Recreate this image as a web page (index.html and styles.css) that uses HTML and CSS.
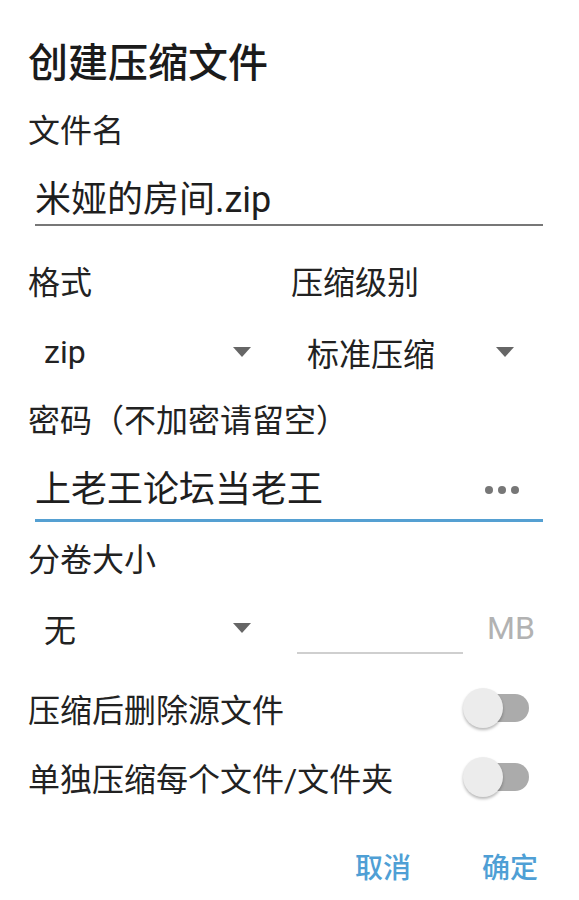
FILE: index.html
```html
<!DOCTYPE html>
<html lang="zh-CN">
<head>
<meta charset="utf-8">
<title>创建压缩文件</title>
<link rel="stylesheet" href="styles.css">
</head>
<body>
<div class="dialog">
  <div class="title">创建压缩文件</div>

  <div class="label label-first">文件名</div>
  <div class="field field-name"><span class="field-text">米娅的房间.zip</span></div>

  <div class="grid grid-top">
    <div class="col">
      <div class="label">格式</div>
      <div class="select select-tall"><span>zip</span><i class="caret"></i></div>
    </div>
    <div class="col">
      <div class="label">压缩级别</div>
      <div class="select select-tall"><span>标准压缩</span><i class="caret"></i></div>
    </div>
  </div>

  <div class="label">密码（不加密请留空）</div>
  <div class="field field-pass">
    <span class="field-text">上老王论坛当老王</span>
    <span class="dots"><i></i><i></i><i></i></span>
  </div>

  <div class="label label-split">分卷大小</div>
  <div class="grid">
    <div class="col">
      <div class="select select-split"><span>无</span><i class="caret"></i></div>
    </div>
    <div class="col split-size">
      <div class="small-input"></div>
      <span class="unit">MB</span>
    </div>
  </div>

  <div class="toggle-row toggle-first">
    <span class="toggle-label">压缩后删除源文件</span>
    <span class="switch"><span class="track"></span><span class="thumb"></span></span>
  </div>
  <div class="toggle-row">
    <span class="toggle-label">单独压缩每个文件/文件夹</span>
    <span class="switch"><span class="track"></span><span class="thumb"></span></span>
  </div>

  <div class="actions">
    <span class="btn">取消</span>
    <span class="btn">确定</span>
  </div>
</div>
</body>
</html>
```

FILE: styles.css
```css
* { box-sizing: border-box; }
html, body {
  margin: 0;
  padding: 0;
  background: #ffffff;
}
body {
  font-family: Roboto, "Noto Sans CJK SC", sans-serif;
  color: #222222;
  width: 579px;
  height: 900px;
  overflow: hidden;
}
.dialog {
  padding: 0 36px 0 28px;
}
.title {
  margin-top: 30px;
  height: 60px;
  line-height: 60px;
  font-size: 40px;
  font-weight: 500;
  color: #1b1b1b;
  font-family: "Noto Sans CJK SC", sans-serif;
}
.label {
  height: 50px;
  line-height: 50px;
  font-size: 32px;
  color: #222;
  white-space: nowrap;
}
.label-first { margin-top: 16px; }
.field {
  margin-left: 7px;
  padding-top: 20px;
  display: flex;
  align-items: center;
  justify-content: space-between;
}
.field-text {
  font-size: 36px;
  line-height: 48px;
  color: #1e1e1e;
  white-space: nowrap;
}
.field-name {
  border-bottom: 2px solid #777777;
}
.field-pass {
  padding-bottom: 5px;
  border-bottom: 3px solid #55a0d2;
}
.dots {
  display: flex;
  gap: 5px;
  margin-right: 24px;
}
.dots i {
  width: 8px;
  height: 8px;
  border-radius: 50%;
  background: #777777;
}
.grid {
  display: grid;
  grid-template-columns: 263px 1fr;
}
.grid-top { margin-top: 32px; }
.select {
  display: flex;
  align-items: center;
  justify-content: space-between;
  padding-left: 16px;
  width: 223px;
  font-size: 32px;
  color: #222;
}
.select-tall { height: 88px; }
.select-split { height: 86px; }
.caret {
  width: 0;
  height: 0;
  border-left: 9.5px solid transparent;
  border-right: 9.5px solid transparent;
  border-top: 10px solid #666666;
}
.label-split { margin-top: 13px; }
.split-size {
  display: flex;
  align-items: center;
  height: 86px;
  padding-left: 6px;
}
.small-input {
  width: 166px;
  height: 52px;
  border-bottom: 2px solid #cfcfcf;
}
.unit {
  margin-left: 24px;
  font-size: 32px;
  color: #b2b2b2;
}
.toggle-row {
  height: 69px;
  display: flex;
  align-items: center;
  justify-content: space-between;
}
.toggle-first { margin-top: 2px; }
.toggle-label {
  font-size: 32px;
  color: #222;
  white-space: nowrap;
}
.switch {
  position: relative;
  width: 66px;
  height: 40px;
  margin-right: 14px;
}
.track {
  position: absolute;
  left: 6px;
  right: 0;
  top: 6px;
  height: 28px;
  border-radius: 14px;
  background: #ababab;
}
.thumb {
  position: absolute;
  left: 0;
  top: 0;
  width: 40px;
  height: 40px;
  border-radius: 50%;
  background: #ececec;
  box-shadow: 0 2px 3px rgba(0, 0, 0, 0.28);
}
.actions {
  margin-top: 31px;
  display: flex;
  justify-content: flex-end;
  gap: 71px;
  padding-right: 5px;
}
.btn {
  font-size: 28px;
  line-height: 48px;
  font-weight: 500;
  color: #4f9fd5;
  font-family: "Noto Sans CJK SC", sans-serif;
}
```
